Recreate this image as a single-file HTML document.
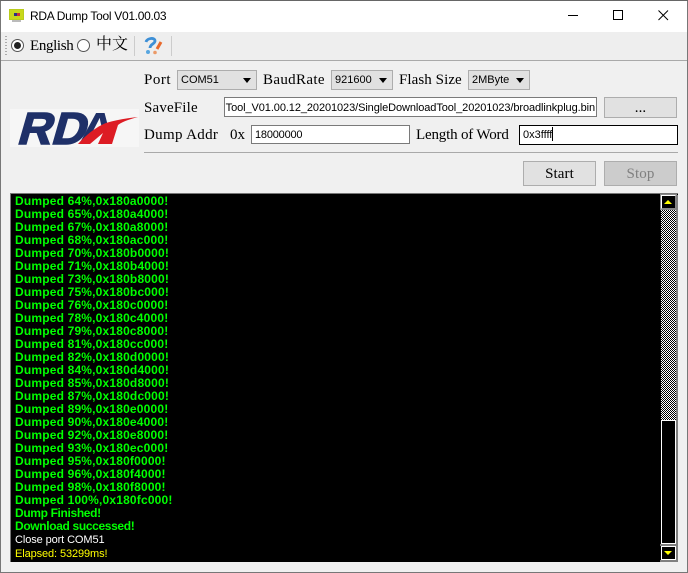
<!DOCTYPE html>
<html><head><meta charset="utf-8">
<style>
html,body{margin:0;padding:0}
body{width:688px;height:573px;overflow:hidden;position:relative;background:#f0f0f0;font-family:"Liberation Serif","Noto Serif CJK SC",serif;color:#000}
.a{position:absolute;white-space:nowrap}
.lb{font-size:15px;line-height:18px}
.ss{font-family:"Liberation Sans",sans-serif}
.cb{position:absolute;height:18px;background:#e1e1e1;border:1px solid #adadad;font:11px/18px "Liberation Sans",sans-serif;padding-left:3px;box-sizing:content-box}
.cb:after{content:"";position:absolute;right:5px;top:7px;border:4px solid transparent;border-top:5px solid #000;border-bottom:0}
.in{position:absolute;background:#fff;border:1px solid #7a7a7a;font:11px/18px "Liberation Sans",sans-serif;overflow:hidden;white-space:nowrap}
.btn{position:absolute;background:#e1e1e1;border:1px solid #adadad;box-sizing:border-box;text-align:center;font-size:15px;letter-spacing:.1px}
#log{position:absolute;left:15px;top:195px;font:bold 12px/13px "Liberation Sans",sans-serif;color:#0f0;white-space:pre;letter-spacing:.18px}
#log span{font-weight:normal;letter-spacing:-.05px}
#log b{letter-spacing:-.35px}
</style></head><body>
<div class="a" style="left:0;top:0;width:688px;height:32px;background:#fff"></div>
<svg class="a" style="left:9px;top:8px" width="16" height="16"><rect x="0" y="1" width="15" height="11" fill="#b9cc1c"/><rect x="1" y="2" width="13" height="9" fill="#c8d81a"/><rect x="5" y="5" width="3" height="3" fill="#2c2f86"/><rect x="8" y="5" width="3" height="3" fill="#c33"/><rect x="3" y="12" width="9" height="2" fill="#bbb"/></svg>
<div class="a ss" style="left:30px;top:8px;font-size:12px;line-height:16px;letter-spacing:-.3px">RDA Dump Tool V01.00.03</div>
<div class="a" style="left:568px;top:15px;width:10px;height:1px;background:#000"></div>
<div class="a" style="left:613px;top:10px;width:8px;height:8px;border:1px solid #000"></div>
<svg class="a" style="left:658px;top:10px" width="11" height="11"><path d="M.5.5L10 10M10 .5L.5 10" stroke="#000" fill="none"/></svg>

<div class="a" style="left:0;top:32px;width:688px;height:28px;background:#eee"></div>
<div class="a" style="left:0;top:60px;width:688px;height:1px;background:#a9a9a9"></div>
<div class="a" style="left:5px;top:36px;width:2px;height:21px;background:repeating-linear-gradient(#aaa 0 1px,transparent 1px 3px)"></div>
<svg class="a" style="left:10px;top:38px" width="15" height="15"><circle cx="7.5" cy="7.5" r="6" fill="#fff" stroke="#555"/><circle cx="7.5" cy="7.5" r="3.5" fill="#222"/></svg>
<div class="a" style="left:30px;top:37px;font-size:15px;line-height:18px;letter-spacing:-.35px">English</div>
<svg class="a" style="left:76px;top:38px" width="15" height="15"><circle cx="7.5" cy="7.5" r="6" fill="#fff" stroke="#555"/></svg>
<div class="a" style="left:96px;top:35px;font-size:16px;line-height:20px;font-family:'Liberation Sans','Noto Serif CJK SC',serif">中文</div>
<div class="a" style="left:134px;top:36px;width:1px;height:20px;background:#ccc"></div>
<div class="a" style="left:171px;top:36px;width:1px;height:20px;background:#ccc"></div>
<svg class="a" style="left:143px;top:37px" width="20" height="18"><path d="M3 5C4 1 12 0 12 4C12 7 7 7 7 11" fill="none" stroke="#3d8fd6" stroke-width="2.800"/><circle cx="5" cy="15" r="2" fill="#58a6e0"/><path d="M18 5L14 12" stroke="#e8692c" stroke-width="3"/><circle cx="12" cy="15.500" r="1.800" fill="#eb9a68"/></svg>

<div class="a lb" style="left:144px;top:71px;letter-spacing:.5px">Port</div>
<div class="cb" style="left:177px;top:70px;width:75px">COM51</div>
<div class="a lb" style="left:263px;top:71px;letter-spacing:.34px">BaudRate</div>
<div class="cb" style="left:331px;top:70px;width:57px">921600</div>
<div class="a lb" style="left:399px;top:71px;letter-spacing:.07px">Flash Size</div>
<div class="cb" style="left:468px;top:70px;width:57px">2MByte</div>

<div class="a lb" style="left:144px;top:99px;letter-spacing:.16px">SaveFile</div>
<div class="in" style="left:224px;top:97px;width:371px;height:18px"><span style="position:absolute;right:1px;top:1px;letter-spacing:-.09px">Tool_V01.00.12_20201023/SingleDownloadTool_20201023/broadlinkplug.bin</span></div>
<div class="btn" style="left:604px;top:97px;width:73px;height:21px;line-height:21px">...</div>

<svg class="a" style="left:10px;top:109px" width="129" height="38" viewBox="0 0 129 38"><defs><clipPath id="c"><path d="M60 0H129V9L90 17L68 35H60Z"/></clipPath></defs><rect width="129" height="38" fill="#f6f6f6"/>
<text transform="translate(6,35) skewX(-16)" font-family="Liberation Sans" font-weight="bold" font-size="45" fill="#1f3068" stroke="#1f3068" stroke-width="1.500" textLength="68" lengthAdjust="spacingAndGlyphs">RD</text>
<g clip-path="url(#c)"><text transform="translate(68,35) skewX(-8)" font-family="Liberation Sans" font-weight="bold" font-size="45" fill="#1f3068" textLength="36" lengthAdjust="spacingAndGlyphs">A</text></g>
<path d="M68 35C76 26 86 18 96 14C106 11 118 9 128 8C120 10 112 13 108 16L102 35H88L93 24L80 35Z" fill="#dd1c24"/></svg>

<div class="a lb" style="left:144px;top:126px;letter-spacing:.33px">Dump Addr</div>
<div class="a lb" style="left:230px;top:126px">0x</div>
<div class="in" style="left:251px;top:125px;height:17px;line-height:19px;padding-left:3px;width:154px;letter-spacing:-.2px">18000000</div>
<div class="a lb" style="left:416px;top:126px;letter-spacing:-.18px">Length of Word</div>
<div class="in" style="left:519px;top:125px;width:154px;height:18px;line-height:19px;padding-left:3px;border-color:#000">0x3ffff<span style="display:inline-block;width:1px;height:14px;background:#000;vertical-align:-3px"></span></div>
<div class="a" style="left:144px;top:152px;width:534px;height:1px;background:#a9a9a9"></div>

<div class="btn" style="left:523px;top:161px;width:73px;height:25px;line-height:24px">Start</div>
<div class="btn" style="left:604px;top:161px;width:73px;height:25px;line-height:24px;background:#ccc;color:#808080">Stop</div>

<div class="a" style="left:10px;top:193px;width:668px;height:369px;background:#000;border-top:1px solid #777;border-left:1px solid #777;box-sizing:border-box"></div>
<div id="log">Dumped 64%,0x180a0000!
Dumped 65%,0x180a4000!
Dumped 67%,0x180a8000!
Dumped 68%,0x180ac000!
Dumped 70%,0x180b0000!
Dumped 71%,0x180b4000!
Dumped 73%,0x180b8000!
Dumped 75%,0x180bc000!
Dumped 76%,0x180c0000!
Dumped 78%,0x180c4000!
Dumped 79%,0x180c8000!
Dumped 81%,0x180cc000!
Dumped 82%,0x180d0000!
Dumped 84%,0x180d4000!
Dumped 85%,0x180d8000!
Dumped 87%,0x180dc000!
Dumped 89%,0x180e0000!
Dumped 90%,0x180e4000!
Dumped 92%,0x180e8000!
Dumped 93%,0x180ec000!
Dumped 95%,0x180f0000!
Dumped 96%,0x180f4000!
Dumped 98%,0x180f8000!
Dumped 100%,0x180fc000!
<b>Dump Finished!</b>
<b>Download successed!</b>
<span style="color:#fff;font-size:11px;letter-spacing:-.1px">Close port COM51</span>
<span style="color:#ff0;font-size:11px;letter-spacing:-.1px">Elapsed: 53299ms!</span></div>

<div class="a" style="left:661px;top:209px;width:15px;height:211px;background:conic-gradient(#fff 25%,#000 0 50%,#fff 0 75%,#000 0) 0 0/2px 2px"></div>
<div class="a" style="left:661px;top:195px;width:15px;height:14px;border:1px solid #fff;box-sizing:border-box;border-right-color:#888;border-bottom-color:#888;outline:1px solid #888"></div>
<div class="a" style="left:664px;top:200px;border:4px solid transparent;border-bottom:4px solid #ff0;border-top:0"></div>
<div class="a" style="left:661px;top:420px;width:15px;height:124px;border:1px solid #fff;box-sizing:border-box"></div>
<div class="a" style="left:660px;top:544px;width:16px;height:2px;background:#808080"></div>
<div class="a" style="left:661px;top:546px;width:15px;height:14px;border:1px solid #fff;box-sizing:border-box"></div>
<div class="a" style="left:660px;top:560px;width:18px;height:2px;background:#808080"></div>
<div class="a" style="left:664px;top:551px;border:4px solid transparent;border-top:4px solid #ff0;border-bottom:0"></div>
<div class="a" style="left:676px;top:195px;width:2px;height:367px;background:#808080"></div>

<div class="a" style="left:0;top:0;width:1px;height:573px;background:#777"></div>
<div class="a" style="left:687px;top:0;width:1px;height:573px;background:#777"></div>
<div class="a" style="left:0;top:0;width:688px;height:1px;background:#666"></div>
<div class="a" style="left:0;top:572px;width:688px;height:1px;background:#777"></div>
</body></html>
